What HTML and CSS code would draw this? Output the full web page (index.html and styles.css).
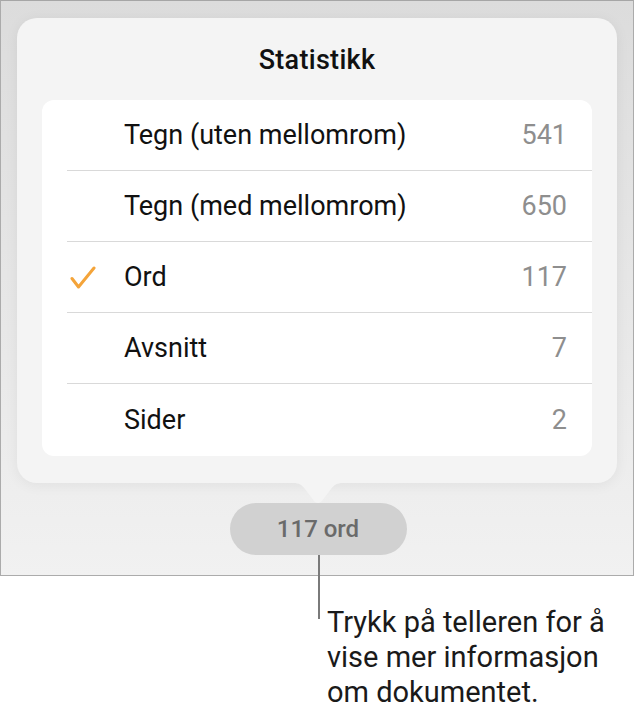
FILE: index.html
```html
<!DOCTYPE html>
<html lang="no">
<head>
<meta charset="utf-8">
<link rel="stylesheet" href="styles.css">
</head>
<body>
<div class="frame">
  <div class="popover">
    <h1 class="title">Statistikk</h1>
    <div class="card">
      <div class="row"><span class="check"></span><span class="label">Tegn (uten mellomrom)</span><span class="value">541</span></div>
      <div class="row"><span class="check"></span><span class="label">Tegn (med mellomrom)</span><span class="value">650</span></div>
      <div class="row"><span class="check"><svg width="26" height="24" viewBox="0 0 26 24"><path d="M2 12.5 L8.5 21 L24 2" fill="none" stroke="#f4a43a" stroke-width="3" stroke-linecap="round" stroke-linejoin="round"/></svg></span><span class="label">Ord</span><span class="value">117</span></div>
      <div class="row"><span class="check"></span><span class="label">Avsnitt</span><span class="value">7</span></div>
      <div class="row"><span class="check"></span><span class="label">Sider</span><span class="value">2</span></div>
    </div>
  </div>
  <div class="arrow"><svg width="50" height="20" viewBox="0 0 50 20"><path d="M0 0 H50 C44 0 41 2 38 6 L29 18 C27 20.5 23 20.5 21 18 L12 6 C9 2 6 0 0 0 Z" fill="#f4f4f4"/></svg></div>
  <div class="pill">117 ord</div>
</div>
<p class="note">Trykk på telleren for å<br>vise mer informasjon<br>om dokumentet.</p>
</body>
</html>
```

FILE: styles.css
```css
html, body {
  margin: 0;
  padding: 0;
  background: #ffffff;
  font-family: Roboto, "Noto Sans", sans-serif;
}
body {
  width: 635px;
  height: 716px;
  overflow: hidden;
}
.frame {
  box-sizing: border-box;
  width: 634px;
  height: 576px;
  border: 1px solid #ababab;
  border-top-color: #a6a6a6;
  background: linear-gradient(#dcdcdc, #f1f1f1);
  display: flex;
  flex-direction: column;
  align-items: center;
  padding-top: 17px;
}
.popover {
  box-sizing: border-box;
  width: 600px;
  height: 465px;
  background: #f4f4f4;
  border-radius: 20px;
  padding: 0 25px;
  box-shadow: 0 2px 14px rgba(0, 0, 0, 0.06);
}
.title {
  margin: 0;
  height: 82px;
  line-height: 84px;
  text-align: center;
  font-size: 27px;
  font-weight: 500;
  color: #111;
  letter-spacing: 0.3px;
}
.card {
  background: #ffffff;
  border-radius: 12px;
  height: 356px;
  overflow: hidden;
}
.row {
  display: flex;
  align-items: center;
  height: 70px;
  margin-left: 25px;
  padding-right: 25px;
  border-bottom: 1px solid #d9d9d9;
  font-size: 27px;
}
.row:last-child {
  border-bottom: none;
  height: 72px;
}
.check {
  width: 57px;
  display: flex;
  align-items: center;
}
.check svg {
  margin-left: 3px;
  margin-top: 2px;
}
.label {
  flex: 1;
  color: #111;
}
.value {
  color: #8e8e8e;
}
.arrow {
  height: 20px;
  display: flex;
  justify-content: center;
  margin-left: 2px;
}
.arrow svg {
  display: block;
}
.pill {
  position: relative;
  width: 177px;
  height: 52px;
  border-radius: 26px;
  background: #d1d1d1;
  color: #6a6a6a;
  font-size: 24px;
  font-weight: 500;
  line-height: 52px;
  text-align: center;
  margin-left: 2px;
}
.pill::after {
  content: "";
  position: absolute;
  left: 88px;
  top: 52px;
  width: 2px;
  height: 64px;
  background: #7a7a7a;
}
.note {
  margin: 29px 0 0 327px;
  font-size: 29px;
  line-height: 35px;
  color: #1a1a1a;
  white-space: nowrap;
}
```
